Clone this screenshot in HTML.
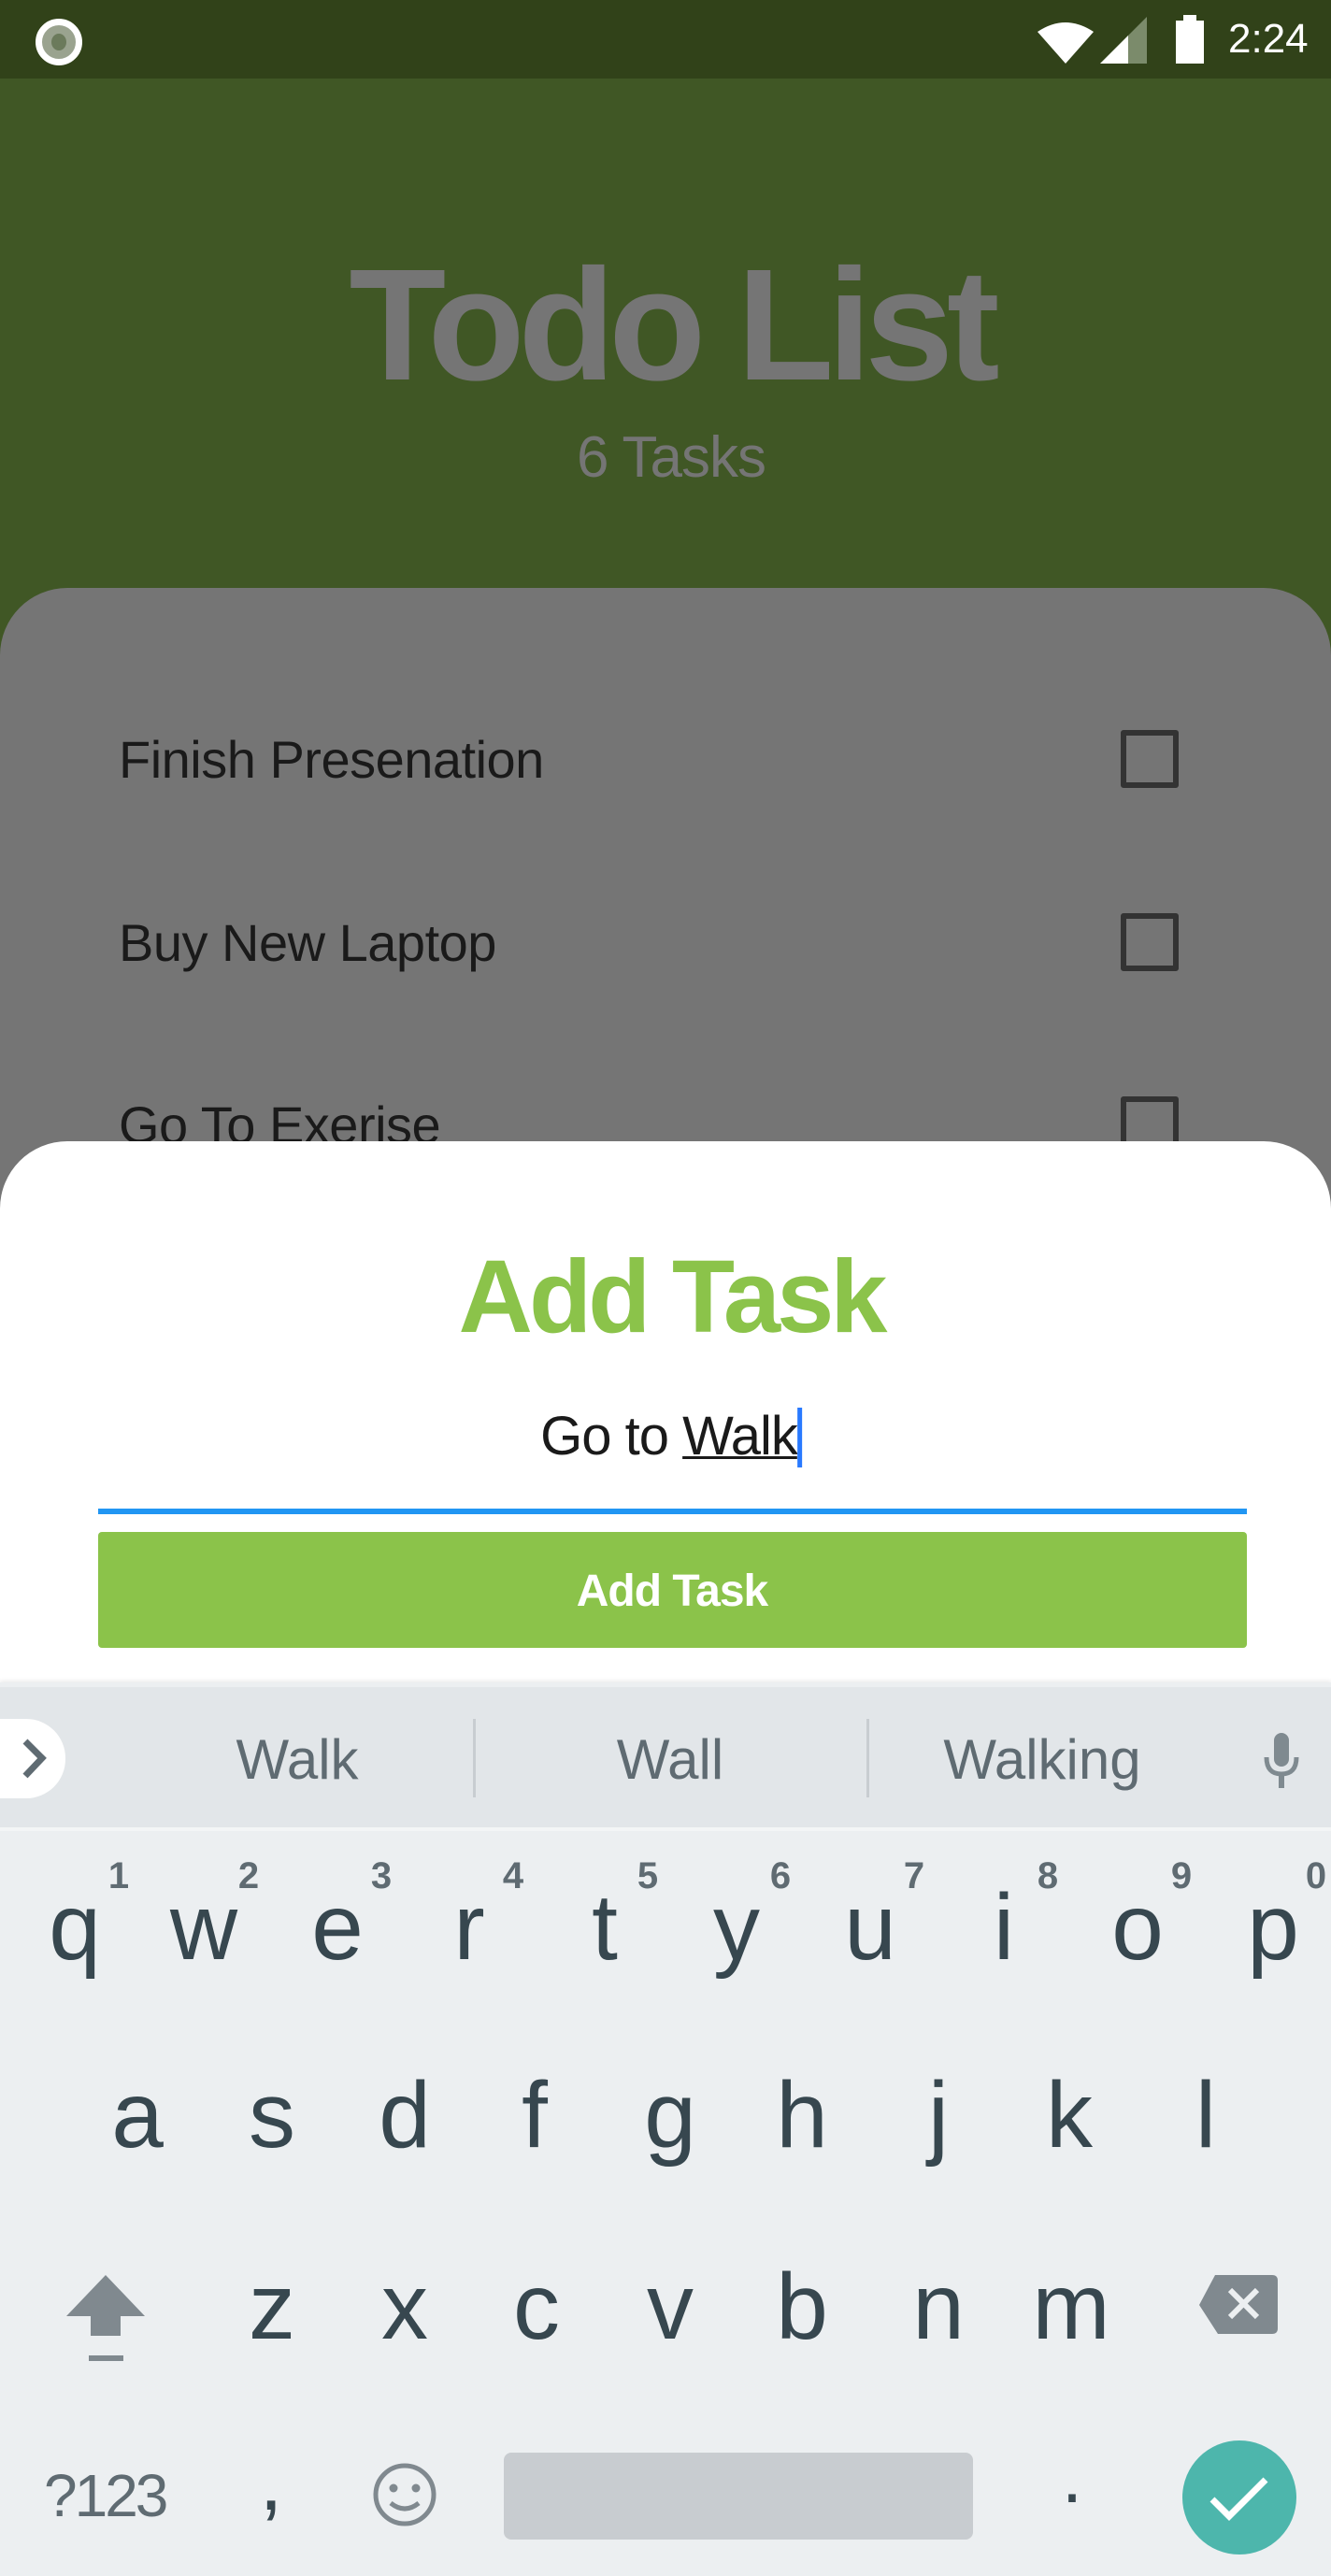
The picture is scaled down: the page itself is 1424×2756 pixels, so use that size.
<!DOCTYPE html>
<html><head><meta charset="utf-8"><style>
*{margin:0;padding:0;box-sizing:border-box}
body{width:1424px;height:2756px;position:relative;overflow:hidden;background:#405725;font-family:"Liberation Sans",sans-serif}
.a{position:absolute;white-space:nowrap;line-height:1}
.c{transform:translateX(-50%)}
.k{font-size:100px;color:#37474f}
.n{font-size:40px;color:#5f6b72;font-weight:bold}
.cb{position:absolute;left:1199px;width:62px;height:62px;border:6px solid #333;border-radius:3px}
</style></head><body>
<div class="a" style="left:0;top:0;width:1424px;height:84px;background:#314219"></div>
<div class="a" style="left:38px;top:20px;width:50px;height:50px;border-radius:50%;border:7px solid #fff;background:#9aa38f"></div>
<div class="a" style="left:55px;top:36px;width:16px;height:18px;border-radius:50%;background:#6b7a5b"></div>
<svg class="a" style="left:1100px;top:14px" width="320" height="60" viewBox="1100 14 320 60">
<path d="M1110 34 Q1140 14 1170 34 L1140 68 Z" fill="#fff"/>
<path d="M1177 68 L1227 18 L1227 68 Z" fill="#7b8b6b"/><path d="M1177 68 L1207 38 L1207 68 Z" fill="#fff"/>
<rect x="1258" y="22" width="30" height="46" fill="#fff"/><rect x="1266" y="16" width="14" height="8" fill="#fff"/>
<text x="1314" y="56" font-size="44" fill="#fff" font-family="Liberation Sans">2:24</text>
</svg>
<div class="a c" style="left:718px;top:263px;font-size:170px;font-weight:bold;color:#757575;letter-spacing:-7px">Todo List</div>
<div class="a c" style="left:718px;top:459px;font-size:62px;color:#757575;letter-spacing:-1px">6 Tasks</div>
<div class="a" style="left:0;top:629px;width:1424px;height:700px;background:#757575;border-radius:72px 72px 0 0"></div>
<div class="a" style="left:127px;top:785px;font-size:56px;color:#1a1a1a;letter-spacing:-0.5px">Finish Presenation</div>
<div class="cb" style="top:781px"></div>
<div class="a" style="left:127px;top:981px;font-size:56px;color:#1a1a1a;letter-spacing:-0.5px">Buy New Laptop</div>
<div class="cb" style="top:977px"></div>
<div class="a" style="left:127px;top:1176px;font-size:56px;color:#1a1a1a;letter-spacing:-0.5px">Go To Exerise</div>
<div class="cb" style="top:1173px"></div>
<div class="a" style="left:0;top:1221px;width:1424px;height:600px;background:#fff;border-radius:72px 72px 0 0"></div>
<div class="a c" style="left:718px;top:1333px;font-size:110px;font-weight:bold;color:#8bc34a;letter-spacing:-4px">Add Task</div>
<div class="a c" style="left:718px;top:1506px;font-size:58px;color:#1a1a1a;letter-spacing:-1px">Go to <span style="text-decoration:underline;text-decoration-thickness:3px">Walk</span><span style="display:inline-block;width:5px;height:64px;background:#2979ff;vertical-align:-14px"></span></div>
<div class="a" style="left:105px;top:1614px;width:1229px;height:6px;background:#2196f3"></div>
<div class="a" style="left:105px;top:1639px;width:1229px;height:124px;background:#8bc34a;border-radius:4px"></div>
<div class="a c" style="left:719px;top:1679px;font-size:48px;font-weight:bold;color:#fff;letter-spacing:-1px">Add Task</div>
<div class="a" style="left:0;top:1800px;width:1424px;height:956px;background:#eceff1;box-shadow:0 -2px 4px rgba(0,0,0,.08)"></div>
<div class="a" style="left:0;top:1805px;width:1424px;height:150px;background:#e2e6e9"></div>
<div class="a" style="left:0;top:1955px;width:1424px;height:4px;background:#f3f5f6"></div>
<div class="a" style="left:0;top:1839px;width:70px;height:85px;background:#fff;border-radius:0 42px 42px 0"></div>
<svg class="a" style="left:0;top:1839px" width="70" height="85"><path d="M27 24 L45 42 L27 61" stroke="#5f6b72" stroke-width="7" fill="none"/></svg>
<div class="a c" style="left:318px;top:1853px;font-size:60px;color:#5f6b72">Walk</div>
<div class="a c" style="left:717px;top:1853px;font-size:60px;color:#5f6b72">Wall</div>
<div class="a c" style="left:1115px;top:1853px;font-size:60px;color:#5f6b72">Walking</div>
<div class="a" style="left:506px;top:1839px;width:3px;height:84px;background:#c8cdd1"></div>
<div class="a" style="left:927px;top:1839px;width:3px;height:84px;background:#c8cdd1"></div>
<svg class="a" style="left:1346px;top:1852px" width="50" height="66"><rect x="17" y="2" width="16" height="36" rx="8" fill="#7f8a90"/><path d="M9 28 Q9 46 25 46 Q41 46 41 28" stroke="#7f8a90" stroke-width="5" fill="none"/><rect x="22" y="45" width="6" height="16" fill="#7f8a90"/></svg>
<div class="a c k" style="left:80px;top:2012px">q</div><div class="a c k" style="left:218px;top:2012px">w</div><div class="a c k" style="left:361px;top:2012px">e</div><div class="a c k" style="left:502px;top:2012px">r</div><div class="a c k" style="left:647px;top:2012px">t</div><div class="a c k" style="left:788px;top:2012px">y</div><div class="a c k" style="left:931px;top:2012px">u</div><div class="a c k" style="left:1074px;top:2012px">i</div><div class="a c k" style="left:1217px;top:2012px">o</div><div class="a c k" style="left:1362px;top:2012px">p</div>
<div class="a c n" style="left:127px;top:1987px">1</div><div class="a c n" style="left:266px;top:1987px">2</div><div class="a c n" style="left:408px;top:1987px">3</div><div class="a c n" style="left:549px;top:1987px">4</div><div class="a c n" style="left:693px;top:1987px">5</div><div class="a c n" style="left:835px;top:1987px">6</div><div class="a c n" style="left:978px;top:1987px">7</div><div class="a c n" style="left:1121px;top:1987px">8</div><div class="a c n" style="left:1264px;top:1987px">9</div><div class="a c n" style="left:1408px;top:1987px">0</div>
<div class="a c k" style="left:147px;top:2213px">a</div><div class="a c k" style="left:291px;top:2213px">s</div><div class="a c k" style="left:433px;top:2213px">d</div><div class="a c k" style="left:572px;top:2213px">f</div><div class="a c k" style="left:717px;top:2213px">g</div><div class="a c k" style="left:858px;top:2213px">h</div><div class="a c k" style="left:1004px;top:2213px">j</div><div class="a c k" style="left:1144px;top:2213px">k</div><div class="a c k" style="left:1290px;top:2213px">l</div>
<div class="a c k" style="left:291px;top:2418px">z</div><div class="a c k" style="left:433px;top:2418px">x</div><div class="a c k" style="left:574px;top:2418px">c</div><div class="a c k" style="left:717px;top:2418px">v</div><div class="a c k" style="left:858px;top:2418px">b</div><div class="a c k" style="left:1004px;top:2418px">n</div><div class="a c k" style="left:1146px;top:2418px">m</div>
<svg class="a" style="left:0;top:0" width="1424" height="2756">
<path d="M113 2434 L155 2478 L129 2478 L129 2499 L97 2499 L97 2478 L71 2478 Z" fill="#80898f"/>
<rect x="95" y="2520" width="37" height="6" fill="#80898f"/>
<path d="M1300 2434 L1361 2434 Q1367 2434 1367 2440 L1367 2491 Q1367 2497 1361 2497 L1303 2497 L1283 2466 Z" fill="#80898f"/>
<path d="M1316 2450 L1345 2479 M1345 2450 L1316 2479" stroke="#eceff1" stroke-width="6"/>
<circle cx="433" cy="2669" r="31" fill="none" stroke="#80898f" stroke-width="5"/>
<circle cx="421" cy="2662" r="4.5" fill="#80898f"/><circle cx="445" cy="2662" r="4.5" fill="#80898f"/>
<path d="M418 2678 Q433 2690 448 2678" stroke="#80898f" stroke-width="5" fill="none"/>
<rect x="539" y="2624" width="502" height="93" rx="8" fill="#c8ccd0"/>
<circle cx="1326" cy="2672" r="61" fill="#4db6ac"/>
<path d="M1297 2674 L1315 2692 L1354 2653" stroke="#fff" stroke-width="7" fill="none"/>
</svg>
<div class="a" style="left:47px;top:2638px;font-size:64px;color:#5f6b72;letter-spacing:-3px">?123</div>
<div class="a c" style="left:290px;top:2610px;font-size:90px;color:#37474f">,</div>
<div class="a c" style="left:1147px;top:2610px;font-size:80px;color:#37474f">.</div>
</body></html>
